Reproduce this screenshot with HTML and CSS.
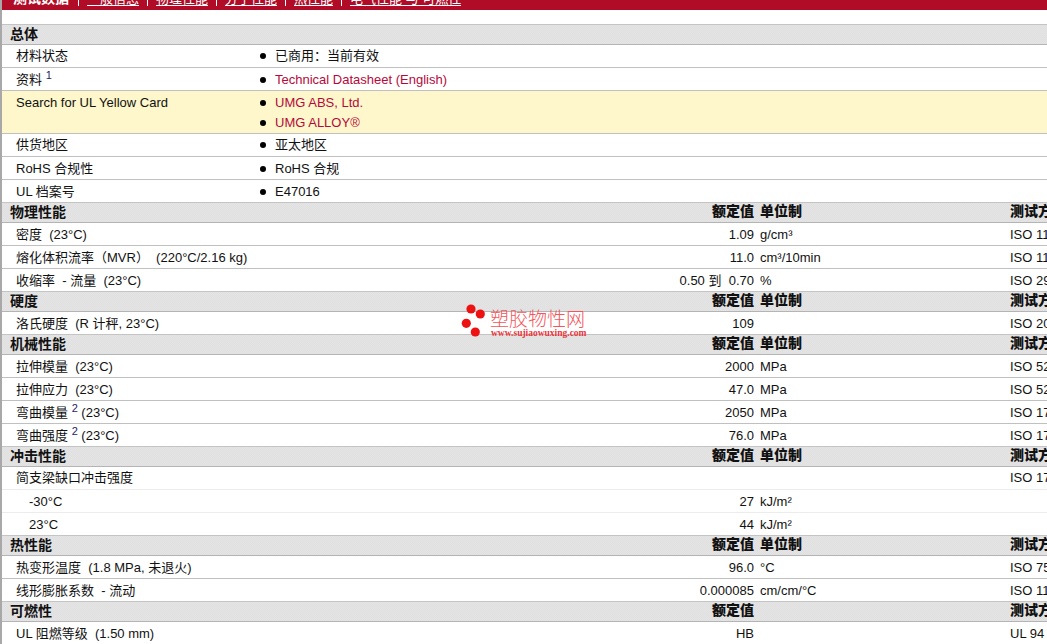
FILE: index.html
```html
<!DOCTYPE html>
<html lang="zh-CN">
<head>
<meta charset="utf-8">
<title>UMG ABS</title>
<link rel="stylesheet" href="styles.css">
</head>
<body>
<div class="page">
  <nav class="nav">
    <strong class="nav-item nav-current">测试数据</strong>
    <a class="nav-item" href="#">一般信息</a>
    <a class="nav-item" href="#">物理性能</a>
    <a class="nav-item" href="#">分子性能</a>
    <a class="nav-item" href="#">热性能</a>
    <a class="nav-item" href="#">电气性能 与 可燃性</a>
  </nav>

  <section class="sheet">
    <div class="band"><span class="band-title">总体</span></div>
    <div class="info"><div class="info-label">材料状态</div><ul class="info-values"><li>已商用：当前有效</li></ul></div>
    <div class="info info-latin"><div class="info-label">资料 <sup>1</sup></div><ul class="info-values"><li><a href="#">Technical Datasheet (English)</a></li></ul></div>
    <div class="info info-yellow"><div class="info-label">Search for UL Yellow Card</div><ul class="info-values"><li><a href="#">UMG ABS, Ltd.</a></li><li><a href="#">UMG ALLOY®</a></li></ul></div>
    <div class="info"><div class="info-label">供货地区</div><ul class="info-values"><li>亚太地区</li></ul></div>
    <div class="info info-latin"><div class="info-label">RoHS 合规性</div><ul class="info-values"><li>RoHS 合规</li></ul></div>
    <div class="info info-latin"><div class="info-label">UL 档案号</div><ul class="info-values"><li>E47016</li></ul></div>

    <div class="band band-grid"><span class="band-title">物理性能</span><b>额定值</b><b>单位制</b><b>测试方法</b></div>
    <div class="data"><span>密度 &nbsp;(23°C)</span><span>1.09</span><span>g/cm³</span><span>ISO 1183</span></div>
    <div class="data"><span>熔化体积流率（MVR） &nbsp;(220°C/2.16 kg)</span><span>11.0</span><span>cm³/10min</span><span>ISO 1133</span></div>
    <div class="data"><span>收缩率 &nbsp;- 流量 &nbsp;(23°C)</span><span>0.50 到 &nbsp;0.70</span><span>%</span><span>ISO 294-4</span></div>

    <div class="band band-grid"><span class="band-title">硬度</span><b>额定值</b><b>单位制</b><b>测试方法</b></div>
    <div class="data"><span>洛氏硬度 &nbsp;(R 计秤, 23°C)</span><span>109</span><span></span><span>ISO 2039-2</span></div>

    <div class="band band-grid"><span class="band-title">机械性能</span><b>额定值</b><b>单位制</b><b>测试方法</b></div>
    <div class="data"><span>拉伸模量 &nbsp;(23°C)</span><span>2000</span><span>MPa</span><span>ISO 527-2</span></div>
    <div class="data"><span>拉伸应力 &nbsp;(23°C)</span><span>47.0</span><span>MPa</span><span>ISO 527-2</span></div>
    <div class="data"><span>弯曲模量 <sup>2</sup> (23°C)</span><span>2050</span><span>MPa</span><span>ISO 178</span></div>
    <div class="data"><span>弯曲强度 <sup>2</sup> (23°C)</span><span>76.0</span><span>MPa</span><span>ISO 178</span></div>

    <div class="band band-grid"><span class="band-title">冲击性能</span><b>额定值</b><b>单位制</b><b>测试方法</b></div>
    <div class="data data-parent data-cjk"><span>简支梁缺口冲击强度</span><span></span><span></span><span>ISO 179</span></div>
    <div class="data data-sub data-parent"><span>-30°C</span><span>27</span><span>kJ/m²</span><span></span></div>
    <div class="data data-sub"><span>23°C</span><span>44</span><span>kJ/m²</span><span></span></div>

    <div class="band band-grid"><span class="band-title">热性能</span><b>额定值</b><b>单位制</b><b>测试方法</b></div>
    <div class="data"><span>热变形温度 &nbsp;(1.8 MPa, 未退火)</span><span>96.0</span><span>°C</span><span>ISO 75-2/A</span></div>
    <div class="data"><span>线形膨胀系数 &nbsp;- 流动</span><span>0.000085</span><span>cm/cm/°C</span><span>ISO 11359-2</span></div>

    <div class="band band-grid"><span class="band-title">可燃性</span><b>额定值</b><b></b><b>测试方法</b></div>
    <div class="data"><span>UL 阻燃等级 &nbsp;(1.50 mm)</span><span>HB</span><span></span><span>UL 94</span></div>
  </section>

  <svg class="watermark" width="130" height="38" viewBox="0 0 130 38" aria-label="塑胶物性网">
    <circle cx="11" cy="9" r="4.6" fill="#ee1111"/>
    <circle cx="20.3" cy="14" r="4.6" fill="#ee1111"/>
    <circle cx="6.3" cy="23.3" r="4.6" fill="#ee1111"/>
    <circle cx="15.3" cy="32" r="4.6" fill="#ee1111"/>
    <text class="wm-name" x="30" y="26">塑胶物性网</text>
    <text class="wm-url" x="31" y="36">www.sujiaowuxing.com</text>
  </svg>
</div>
</body>
</html>
```
FILE: styles.css
```css
html, body {
  margin: 0;
  height: 644px;
  overflow: hidden;
  background: #fff;
}

.page {
  position: relative;
  width: 1300px;
  height: 644px;
  border-left: 2px solid #a8a8a8;
  font-family: "Liberation Sans", "Noto Sans CJK SC", sans-serif;
  font-size: 13px;
  color: #111;
  overflow: hidden;
}

.nav {
  display: flex;
  align-items: flex-end;
  height: 10px;
  overflow: hidden;
  background: #b00c28;
  padding-left: 2px;
}

.nav-item {
  font-size: 13px;
  line-height: 15px;
  margin-bottom: 4px;
  color: #fff;
  white-space: nowrap;
}

.nav-item + .nav-item {
  margin-left: 8px;
  padding-left: 8px;
  border-left: 1px solid #fff;
}

.nav-current {
  font-size: 14px;
  margin-left: 9px;
  margin-right: 1px;
}

a.nav-item {
  text-decoration: none;
  background: linear-gradient(#fff, #fff) no-repeat 8px 14px / calc(100% - 8px) 1px;
}

.sheet {
  margin-top: 14px;
}

.band {
  height: 19px;
  border-top: 1px solid #c4c4c4;
  border-bottom: 1px solid #b4b4b4;
  margin-top: -1px;
  background: repeating-conic-gradient(#e4e4e4 0 25%, #e0e0e0 0 50%) 0 0 / 2px 2px;
  line-height: 19px;
  font-size: 14px;
  font-weight: 700;
}

.band b {
  line-height: 17px;
}

.sheet > .band:first-child {
  margin-top: 0;
}

.band-title {
  padding-left: 8px;
}

.band-grid,
.data {
  display: grid;
  grid-template-columns: 600px 152px 256px 200px;
}

.band-grid b:nth-child(2),
.data span:nth-child(2) {
  text-align: right;
}

.band-grid b:nth-child(3),
.data span:nth-child(3) {
  padding-left: 6px;
}

.info {
  display: flex;
  border-bottom: 1px solid #c0c0c0;
  height: 22px;
  line-height: 22px;
}

.info-latin,
.info-yellow {
  line-height: 24px;
}

.info-yellow {
  height: 42px;
  background: #fdf7cb;
}

.info-label {
  width: 244px;
  padding-left: 14px;
}

.info-values {
  list-style: none;
  margin: 0;
  padding: 0;
}

.info-values li {
  display: flex;
  align-items: center;
  gap: 9px;
}

.info-yellow .info-values {
  padding-top: 2px;
}

.info-yellow .info-values li {
  line-height: 20px;
}

.info-values li::before {
  content: "";
  width: 6px;
  height: 6px;
  border-radius: 50%;
  background: #000;
}

.info-values a {
  color: #b5093a;
  text-decoration: none;
}

.data {
  height: 22px;
  line-height: 24px;
  border-bottom: 1px solid #c0c0c0;
  white-space: nowrap;
}

.data-cjk {
  line-height: 22px;
}

.data span:first-child {
  padding-left: 14px;
}

.data-parent {
  border-bottom-color: #ececec;
}

.data-sub span:first-child {
  padding-left: 27px;
}

sup {
  font-size: 11px;
  line-height: 0;
  color: #2a1a66;
}

.watermark {
  position: absolute;
  left: 458px;
  top: 300px;
}

.wm-name {
  font-family: "Noto Sans CJK SC", sans-serif;
  font-size: 19px;
  font-weight: 300;
  fill: #f4555a;
}

.wm-url {
  font-family: "Liberation Serif", serif;
  font-size: 9.5px;
  font-weight: 700;
  fill: #e8353a;
}
```
